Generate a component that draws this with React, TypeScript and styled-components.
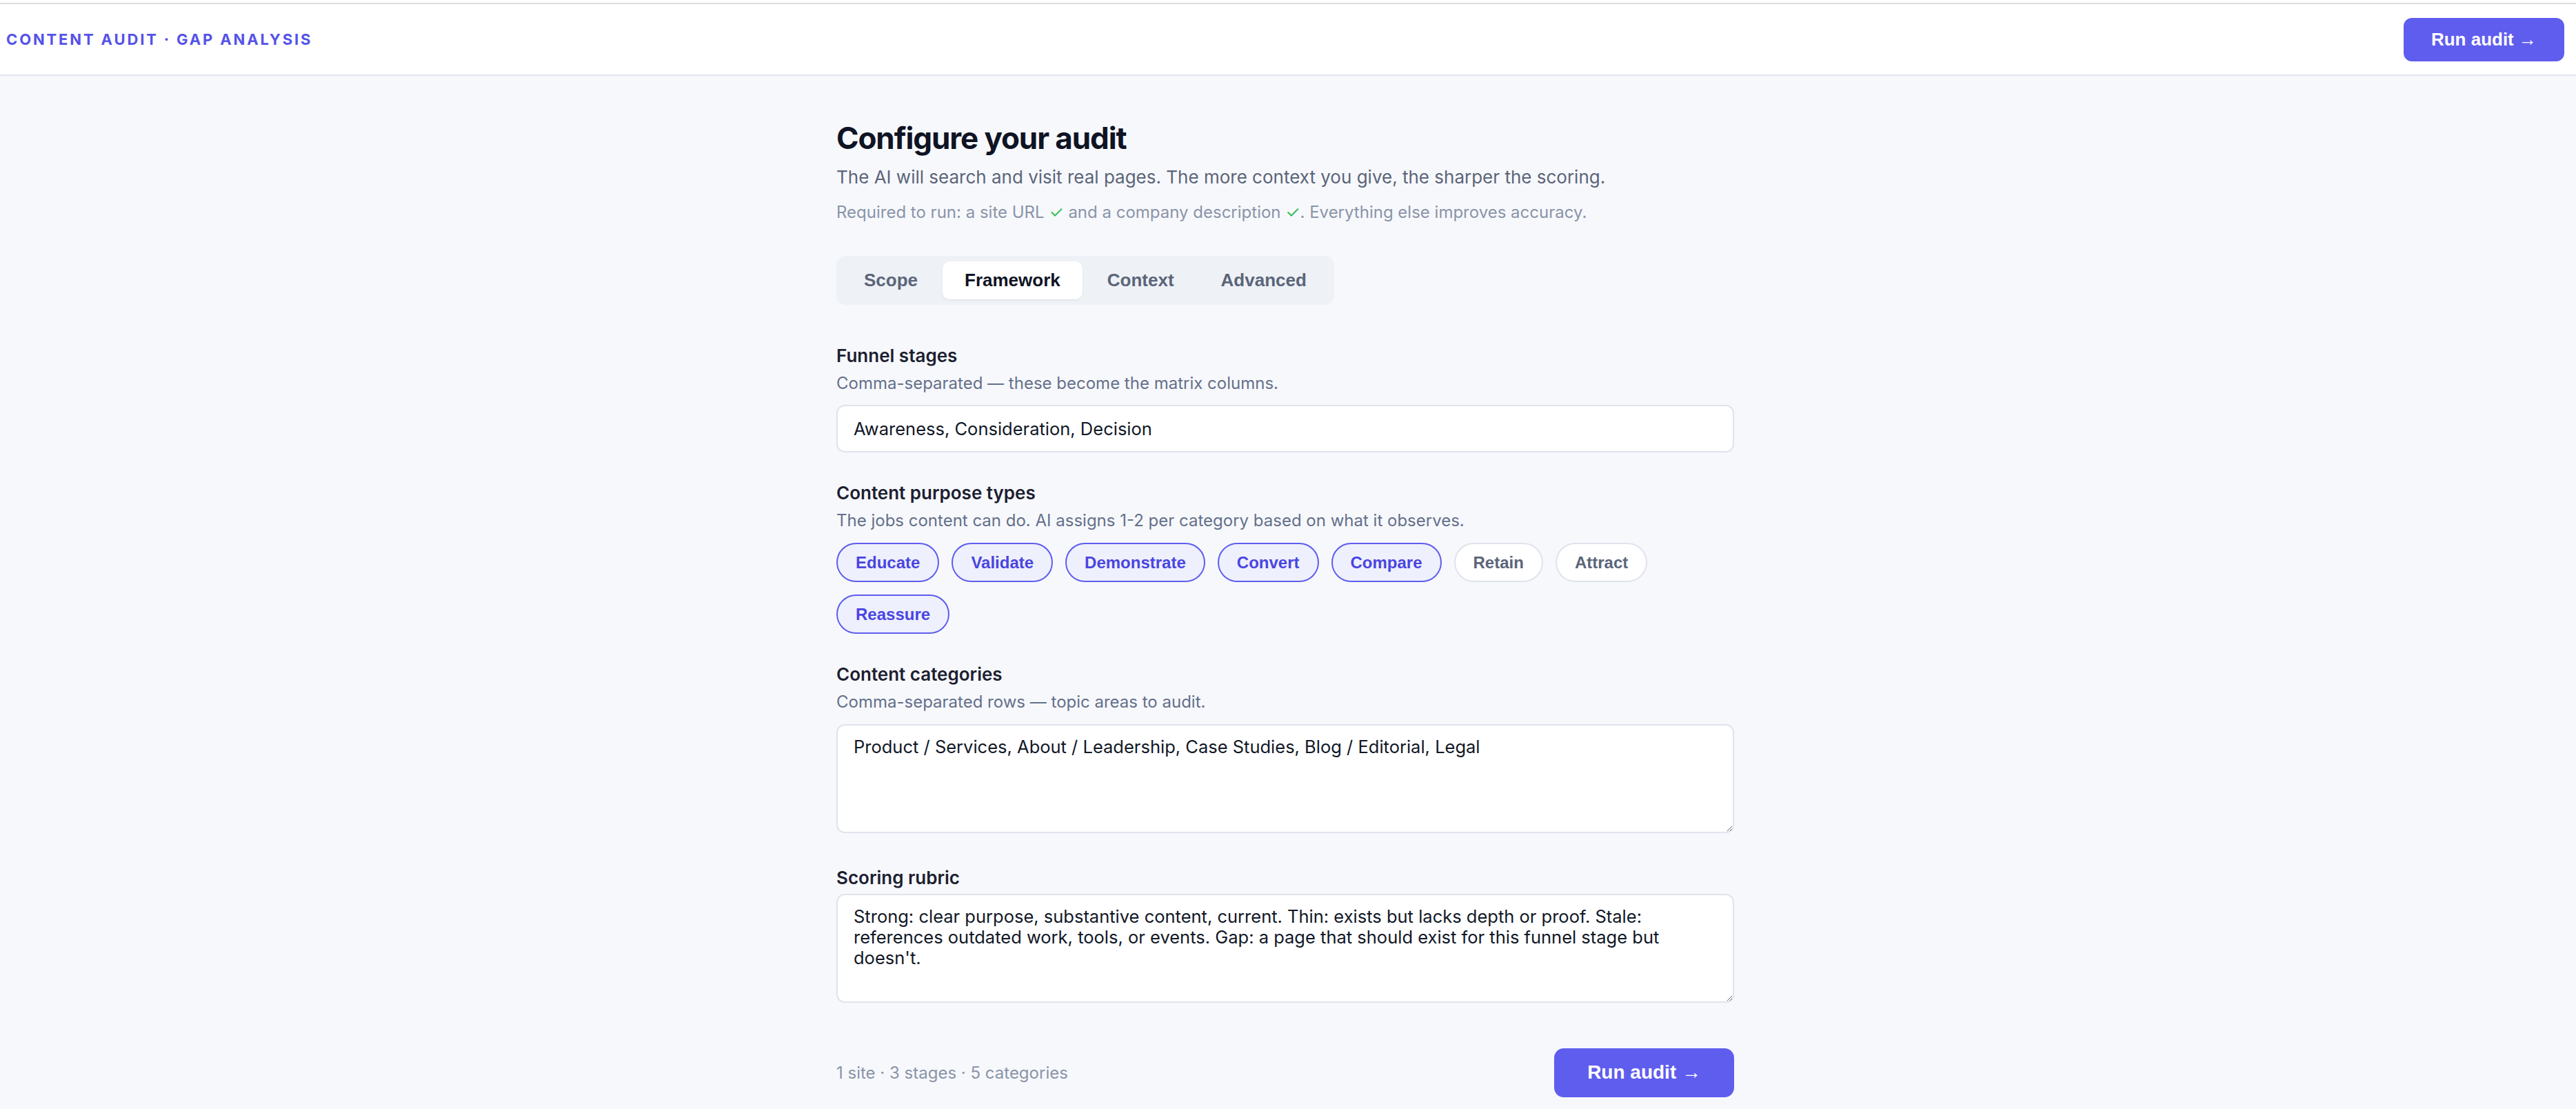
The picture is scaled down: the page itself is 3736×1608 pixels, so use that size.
import styled, { createGlobalStyle } from "styled-components"

const GlobalStyle = createGlobalStyle`
  html, body {
    margin: 0;
    padding: 0;
    background: #f7f8fc;
  }
  body {
    font-family: Inter, "Noto Sans", sans-serif;
    color: #0f1424;
  }
  * { box-sizing: border-box; }
`

const Page = styled.div`
  min-height: 1608px;
  background: #f7f8fc;
  border-top: 4px solid #ffffff;
`

const TopBar = styled.header`
  display: flex;
  align-items: center;
  justify-content: space-between;
  height: 106px;
  padding: 0 17px 0 9px;
  background: #ffffff;
  border-top: 2px solid #dcdcdc;
  border-bottom: 2px solid #e2e5ee;
`

const Brand = styled.div`
  font-size: 22px;
  font-weight: 700;
  letter-spacing: 0.13em;
  text-transform: uppercase;
  color: #5552e9;
`

const RunButton = styled.button<{ $big?: boolean }>`
  font-family: "Liberation Sans", Arial, sans-serif;
  font-weight: 700;
  font-size: ${p => (p.$big ? "28px" : "26px")};
  height: ${p => (p.$big ? "71px" : "63px")};
  padding: 0 ${p => (p.$big ? "48px" : "40px")};
  border: none;
  border-radius: ${p => (p.$big ? "14px" : "12px")};
  background: #5f5dee;
  color: #ffffff;
  cursor: pointer;
`

const Main = styled.main`
  padding: 64px 8px 0 0;
`

const Column = styled.div`
  width: 1302px;
  margin: 0 auto;
`

const Title = styled.h1`
  margin: 0 0 14px;
  font-size: 44px;
  font-weight: 700;
  line-height: 1.2;
  letter-spacing: -0.025em;
  color: #0f1424;
`

const Lead = styled.p`
  margin: 0;
  font-size: 26px;
  color: #5b6579;
`

const Note = styled.p`
  margin: 21px 0 0;
  font-size: 24px;
  color: #8a94a8;
`

const Check = styled.span`
  color: #2fbf55;
`

const Tabs = styled.div`
  display: inline-flex;
  gap: 4px;
  margin-top: 49px;
  padding: 8px;
  background: #eef1f6;
  border-radius: 14px;
`

const Tab = styled.button<{ $active?: boolean }>`
  height: 55px;
  padding: 0 32px;
  font-family: "Liberation Sans", Arial, sans-serif;
  font-weight: 700;
  font-size: 26px;
  border: none;
  border-radius: 10px;
  background: ${p => (p.$active ? "#ffffff" : "transparent")};
  color: ${p => (p.$active ? "#0f1424" : "#5b6579")};
  box-shadow: ${p => (p.$active ? "0 1px 3px rgba(15, 20, 36, 0.08)" : "none")};
  cursor: pointer;
`

const Fields = styled.div`
  display: flex;
  flex-direction: column;
  gap: 43px;
  margin-top: 58px;
`

const Field = styled.div`
  display: flex;
  flex-direction: column;
`

const Label = styled.label`
  margin-bottom: 8px;
  font-size: 26px;
  font-weight: 600;
  color: #1b2030;
`

const Hint = styled.div`
  margin-bottom: 15px;
  font-size: 24px;
  line-height: 1.4;
  color: #64708a;
`

const TextInput = styled.input`
  height: 69px;
  padding: 0 23px;
  font-family: inherit;
  font-size: 25.5px;
  color: #111827;
  background: #ffffff;
  border: 2px solid #dfe3ec;
  border-radius: 12px;
  outline: none;
`

const TextArea = styled.textarea`
  display: block;
  height: 158px;
  margin-bottom: 6px;
  padding: 16px 23px;
  font-family: inherit;
  font-size: 25.5px;
  line-height: 30px;
  color: #111827;
  background: #ffffff;
  border: 2px solid #dfe3ec;
  border-radius: 12px;
  resize: vertical;
  outline: none;
`

const Chips = styled.div`
  display: flex;
  flex-wrap: wrap;
  gap: 18px;
`

const Chip = styled.button<{ $on?: boolean }>`
  padding: 12px 26px;
  font-family: "Liberation Sans", Arial, sans-serif;
  font-weight: 700;
  font-size: 24px;
  line-height: 29px;
  border-radius: 999px;
  border: 2px solid ${p => (p.$on ? "#5f5dee" : "#dfe3ec")};
  background: ${p => (p.$on ? "#eef0fd" : "#ffffff")};
  color: ${p => (p.$on ? "#4a45e0" : "#5b6579")};
  cursor: pointer;
`

const Footer = styled.div`
  display: flex;
  align-items: center;
  justify-content: space-between;
  margin-top: 60px;
  padding-bottom: 40px;
`

const Summary = styled.span`
  font-size: 24px;
  color: #8a94a8;
`

const tabs = ["Scope", "Framework", "Context", "Advanced"]

const purposes = [
  { name: "Educate", on: true },
  { name: "Validate", on: true },
  { name: "Demonstrate", on: true },
  { name: "Convert", on: true },
  { name: "Compare", on: true },
  { name: "Retain", on: false },
  { name: "Attract", on: false },
  { name: "Reassure", on: true },
]

export default function App() {
  return (
    <Page>
      <GlobalStyle />
      <TopBar>
        <Brand>Content Audit · Gap Analysis</Brand>
        <RunButton>Run audit →</RunButton>
      </TopBar>
      <Main>
        <Column>
          <Title>Configure your audit</Title>
          <Lead>The AI will search and visit real pages. The more context you give, the sharper the scoring.</Lead>
          <Note>
            Required to run: a site URL <Check>✓</Check> and a company description <Check>✓</Check>. Everything else improves accuracy.
          </Note>
          <Tabs>
            {tabs.map(t => (
              <Tab key={t} $active={t === "Framework"}>{t}</Tab>
            ))}
          </Tabs>
          <Fields>
            <Field>
              <Label>Funnel stages</Label>
              <Hint>Comma-separated — these become the matrix columns.</Hint>
              <TextInput defaultValue="Awareness, Consideration, Decision" />
            </Field>
            <Field>
              <Label>Content purpose types</Label>
              <Hint>The jobs content can do. AI assigns 1-2 per category based on what it observes.</Hint>
              <Chips>
                {purposes.map(p => (
                  <Chip key={p.name} $on={p.on}>{p.name}</Chip>
                ))}
              </Chips>
            </Field>
            <Field>
              <Label>Content categories</Label>
              <Hint>Comma-separated rows — topic areas to audit.</Hint>
              <TextArea defaultValue="Product / Services, About / Leadership, Case Studies, Blog / Editorial, Legal" />
            </Field>
            <Field>
              <Label>Scoring rubric</Label>
              <TextArea defaultValue="Strong: clear purpose, substantive content, current. Thin: exists but lacks depth or proof. Stale: references outdated work, tools, or events. Gap: a page that should exist for this funnel stage but doesn't." />
            </Field>
          </Fields>
          <Footer>
            <Summary>1 site · 3 stages · 5 categories</Summary>
            <RunButton $big>Run audit →</RunButton>
          </Footer>
        </Column>
      </Main>
    </Page>
  )
}
